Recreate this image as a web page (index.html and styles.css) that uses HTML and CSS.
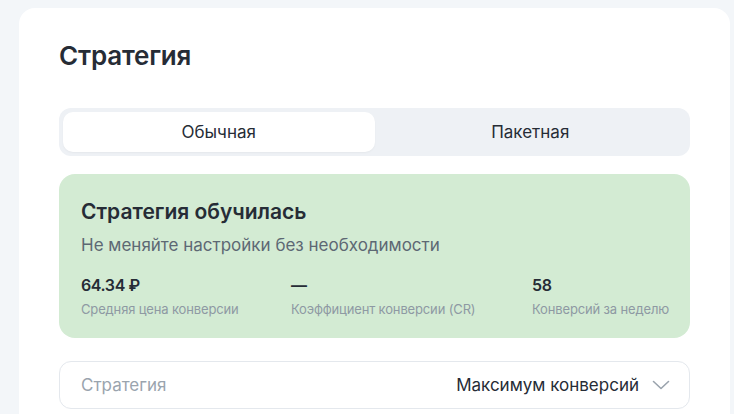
FILE: index.html
```html
<!DOCTYPE html>
<html lang="ru">
<head>
    <meta charset="UTF-8">
    <meta name="viewport" content="width=device-width, initial-scale=1.0">
    <title>Стратегия</title>
    <link rel="stylesheet" href="styles.css">
</head>
<body>

    <div class="card">
        <h1>Стратегия</h1>

        <div class="tabs">
            <button class="tab active">Обычная</button>
            <button class="tab">Пакетная</button>
        </div>

        <div class="status">
            <h2>Стратегия обучилась</h2>
            <p class="status-text">Не меняйте настройки без необходимости</p>
            <div class="stats">
                <div class="stat">
                    <div class="stat-value">64.34 ₽</div>
                    <div class="stat-label">Средняя цена конверсии</div>
                </div>
                <div class="stat">
                    <div class="stat-value">—</div>
                    <div class="stat-label">Коэффициент конверсии (CR)</div>
                </div>
                <div class="stat">
                    <div class="stat-value">58</div>
                    <div class="stat-label">Конверсий за неделю</div>
                </div>
            </div>
        </div>

        <div class="select">
            <span class="select-label">Стратегия</span>
            <span class="select-value">Максимум конверсий</span>
            <svg class="chevron" width="20" height="20" viewBox="0 0 20 20">
                <path d="M2.5 6.5 L10 13.5 L17.5 6.5" fill="none" stroke="#9aa3ad" stroke-width="1.6" stroke-linecap="round" stroke-linejoin="round"/>
            </svg>
        </div>
    </div>

</body>
</html>
```

FILE: styles.css
```css
* {
    margin: 0;
    padding: 0;
    box-sizing: border-box;
}
body {
    font-family: 'Inter', 'Noto Sans', sans-serif;
    background: #f3f6f9;
    padding: 8px 4px 0 19px;
    height: 414px;
    overflow: hidden;
    color: #262c36;
}
.card {
    background: #ffffff;
    border-radius: 16px;
    padding: 30px 40px 40px 40px;
    min-height: 420px;
}
h1 {
    font-size: 26px;
    font-weight: 600;
    line-height: 36px;
    color: #262c36;
    letter-spacing: -0.2px;
}
.tabs {
    margin-top: 34px;
    display: flex;
    background: #eef1f5;
    border-radius: 12px;
    padding: 4px;
    height: 48px;
}
.tab {
    flex: 1;
    border: none;
    background: transparent;
    font-family: inherit;
    font-size: 17px;
    color: #262c36;
    border-radius: 10px;
    cursor: pointer;
}
.tab.active {
    background: #ffffff;
    box-shadow: 0 1px 2px rgba(0, 0, 0, 0.04);
}
.status {
    margin-top: 18px;
    background: #d3ebd3;
    border-radius: 16px;
    padding: 25px 22px 22px 22px;
    height: 164px;
}
h2 {
    font-size: 21px;
    font-weight: 600;
    line-height: 26px;
    color: #262c36;
}
.status-text {
    margin-top: 8px;
    font-size: 17px;
    line-height: 24px;
    color: #5d6873;
}
.stats {
    margin-top: 17px;
    display: grid;
    grid-template-columns: 210px 241px 1fr;
}
.stat-value {
    font-size: 16px;
    font-weight: 600;
    line-height: 22px;
    letter-spacing: -0.4px;
    color: #262c36;
}
.stat-label {
    font-size: 13px;
    line-height: 18px;
    letter-spacing: -0.15px;
    white-space: nowrap;
    color: #8e99a3;
    margin-top: 4px;
}
.select {
    margin-top: 23px;
    height: 48px;
    border: 1px solid #e4e8ed;
    border-radius: 12px;
    display: flex;
    align-items: center;
    padding: 0 18px 0 21px;
}
.select-label {
    font-size: 17px;
    color: #9aa4ae;
    flex: 1;
}
.select-value {
    font-size: 17px;
    color: #262c36;
    margin-right: 12px;
}
```
